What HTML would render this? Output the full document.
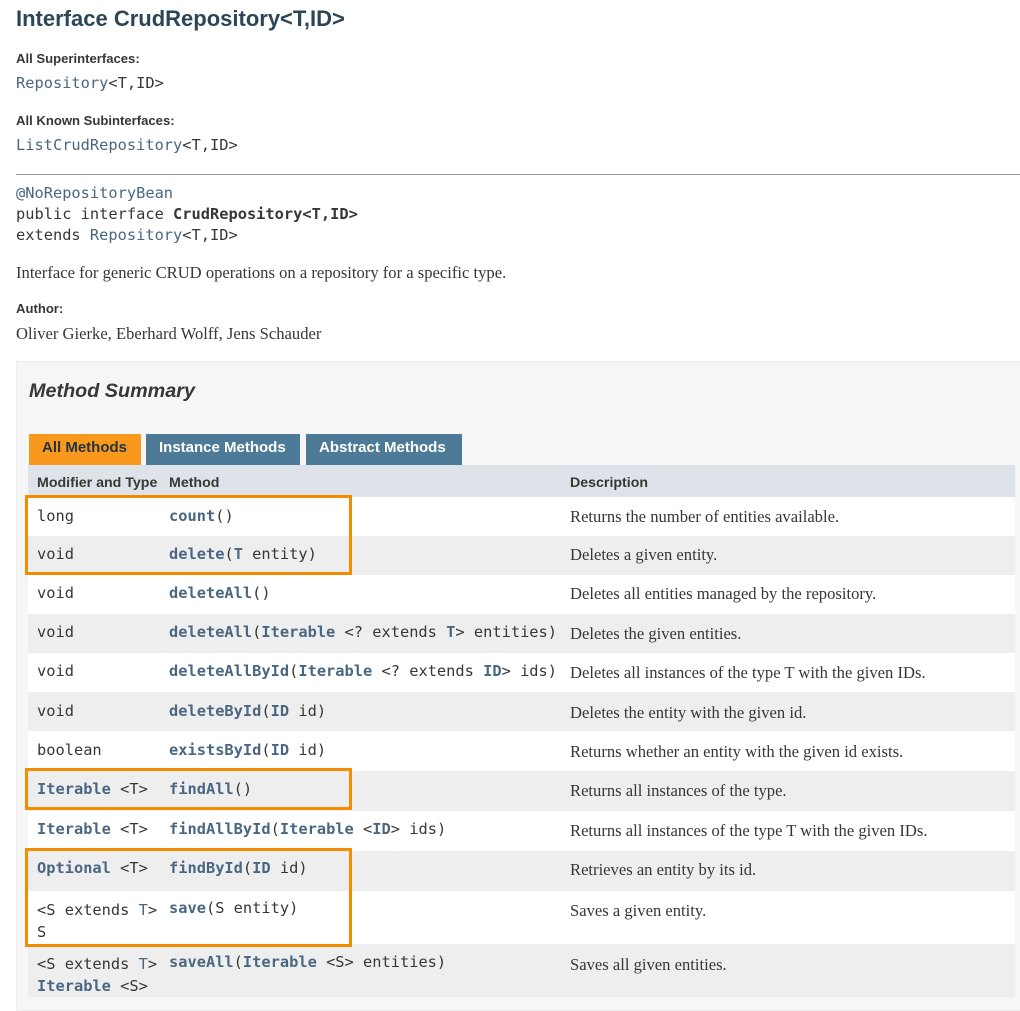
<!DOCTYPE html>
<html><head><meta charset="utf-8"><style>
*{margin:0;padding:0;box-sizing:border-box}
body{width:1020px;height:1003px;overflow:hidden;background:#fff;position:relative;font-family:"DejaVu Sans","Liberation Sans",sans-serif;color:#353833}
.a{position:absolute;white-space:nowrap}
.h1{font-family:"Liberation Sans",sans-serif;font-weight:bold;font-size:22px;color:#2c4557;left:16px;top:6px}
.lbl{font-family:"Liberation Sans",sans-serif;font-weight:bold;font-size:13.1px;color:#353833;left:16px}
.m{font-family:"DejaVu Sans Mono",monospace;font-size:15.35px;color:#353833}
.lk{color:#4a6782}
.b{font-weight:bold;color:#4a6782}
.bk{font-weight:bold;color:#353833}
.s{font-family:"Liberation Serif","DejaVu Serif",serif;font-size:16.6px;color:#353833}
.row{position:absolute;left:28px;width:987px}
.g{background:#eeeeef}.w{background:#fff}
.ob{position:absolute;border:3px solid #f38c00;left:25px;width:327px}
.tab{position:absolute;top:434px;height:31px;font-family:"Liberation Sans",sans-serif;font-weight:bold;font-size:15px;color:#fff;padding:5px 0 0 13px;background:#4d7a97;white-space:nowrap;overflow:hidden}
.th{font-family:'Liberation Sans',sans-serif;font-weight:bold;font-size:14.2px;top:475px}
</style></head><body>
<div class="a h1">Interface CrudRepository&lt;T,ID&gt;</div>
<div class="a lbl" style="top:51px">All Superinterfaces:</div>
<div class="a m" style="left:16px;top:74px"><span class="lk">Repository</span>&lt;T,ID&gt;</div>
<div class="a lbl" style="top:113px">All Known Subinterfaces:</div>
<div class="a m" style="left:16px;top:136px"><span class="lk">ListCrudRepository</span>&lt;T,ID&gt;</div>
<div class="a" style="left:16px;top:174px;width:1004px;height:1px;background:#999"></div>
<div class="a m" style="left:16px;top:183px;line-height:21px"><span class="lk">@NoRepositoryBean</span><br>public interface <span class="bk">CrudRepository&lt;T,ID&gt;</span><br>extends <span class="lk">Repository</span>&lt;T,ID&gt;</div>
<div class="a s" style="left:16px;top:263px">Interface for generic CRUD operations on a repository for a specific type.</div>
<div class="a lbl" style="top:301px">Author:</div>
<div class="a s" style="left:16px;top:324px">Oliver Gierke, Eberhard Wolff, Jens Schauder</div>

<div class="a" style="left:16px;top:361px;width:1010px;height:650px;background:#f6f6f6;border:1px solid #ededed"></div>
<div class="a" style="left:29px;top:380px;font-family:'Liberation Sans',sans-serif;font-weight:bold;font-style:italic;font-size:19.8px;color:#353833">Method Summary</div>
<div class="tab" style="left:29px;width:112px;background:#f8981d;color:#253441">All Methods</div>
<div class="tab" style="left:146px;width:154px">Instance Methods</div>
<div class="tab" style="left:306px;width:156px">Abstract Methods</div>

<div class="row" style="top:465px;height:32px;background:#dee3e9"></div>
<div class="a th" style="left:37px">Modifier and Type</div>
<div class="a th" style="left:169px">Method</div>
<div class="a th" style="left:570px">Description</div>

<div class="row w" style="top:497px;height:39px"></div>
<div class="row g" style="top:536px;height:39px"></div>
<div class="row w" style="top:575px;height:39px"></div>
<div class="row g" style="top:614px;height:39px"></div>
<div class="row w" style="top:653px;height:39px"></div>
<div class="row g" style="top:692px;height:39px"></div>
<div class="row w" style="top:731px;height:40px"></div>
<div class="row g" style="top:771px;height:40px"></div>
<div class="row w" style="top:811px;height:40px"></div>
<div class="row g" style="top:851px;height:40px"></div>
<div class="row w" style="top:891px;height:53px"></div>
<div class="row g" style="top:944px;height:53px"></div>

<div class="a m" style="left:37px;top:507px">long</div><div class="a m" style="left:169px;top:507px"><span class="b">count</span>()</div><div class="a s" style="left:570px;top:507px">Returns the number of entities available.</div>
<div class="a m" style="left:37px;top:545px">void</div><div class="a m" style="left:169px;top:545px"><span class="b">delete</span>(<span class="b">T</span> entity)</div><div class="a s" style="left:570px;top:545px">Deletes a given entity.</div>
<div class="a m" style="left:37px;top:584px">void</div><div class="a m" style="left:169px;top:584px"><span class="b">deleteAll</span>()</div><div class="a s" style="left:570px;top:584px">Deletes all entities managed by the repository.</div>
<div class="a m" style="left:37px;top:623px">void</div><div class="a m" style="left:169px;top:623px"><span class="b">deleteAll</span>(<span class="b">Iterable</span> &lt;? extends <span class="b">T</span>&gt; entities)</div><div class="a s" style="left:570px;top:624px">Deletes the given entities.</div>
<div class="a m" style="left:37px;top:662px">void</div><div class="a m" style="left:169px;top:662px"><span class="b">deleteAllById</span>(<span class="b">Iterable</span> &lt;? extends <span class="b">ID</span>&gt; ids)</div><div class="a s" style="left:570px;top:663px">Deletes all instances of the type T with the given IDs.</div>
<div class="a m" style="left:37px;top:702px">void</div><div class="a m" style="left:169px;top:702px"><span class="b">deleteById</span>(<span class="b">ID</span> id)</div><div class="a s" style="left:570px;top:703px">Deletes the entity with the given id.</div>
<div class="a m" style="left:37px;top:741px">boolean</div><div class="a m" style="left:169px;top:741px"><span class="b">existsById</span>(<span class="b">ID</span> id)</div><div class="a s" style="left:570px;top:742px">Returns whether an entity with the given id exists.</div>
<div class="a m" style="left:37px;top:780px"><span class="b">Iterable</span> &lt;T&gt;</div><div class="a m" style="left:169px;top:780px"><span class="b">findAll</span>()</div><div class="a s" style="left:570px;top:781px">Returns all instances of the type.</div>
<div class="a m" style="left:37px;top:820px"><span class="b">Iterable</span> &lt;T&gt;</div><div class="a m" style="left:169px;top:820px"><span class="b">findAllById</span>(<span class="b">Iterable</span> &lt;<span class="b">ID</span>&gt; ids)</div><div class="a s" style="left:570px;top:821px">Returns all instances of the type T with the given IDs.</div>
<div class="a m" style="left:37px;top:859px"><span class="b">Optional</span> &lt;T&gt;</div><div class="a m" style="left:169px;top:859px"><span class="b">findById</span>(<span class="b">ID</span> id)</div><div class="a s" style="left:570px;top:860px">Retrieves an entity by its id.</div>
<div class="a m" style="left:37px;top:899px;line-height:22px">&lt;S extends <span class="lk">T</span>&gt;<br>S</div><div class="a m" style="left:169px;top:899px"><span class="b">save</span>(S entity)</div><div class="a s" style="left:570px;top:901px">Saves a given entity.</div>
<div class="a m" style="left:37px;top:953px;line-height:22px">&lt;S extends <span class="lk">T</span>&gt;<br><span class="b">Iterable</span> &lt;S&gt;</div><div class="a m" style="left:169px;top:953px"><span class="b">saveAll</span>(<span class="b">Iterable</span> &lt;S&gt; entities)</div><div class="a s" style="left:570px;top:955px">Saves all given entities.</div>

<div class="ob" style="top:495px;height:80px"></div>
<div class="ob" style="top:768px;height:42px"></div>
<div class="ob" style="top:848px;height:99px"></div>
</body></html>
